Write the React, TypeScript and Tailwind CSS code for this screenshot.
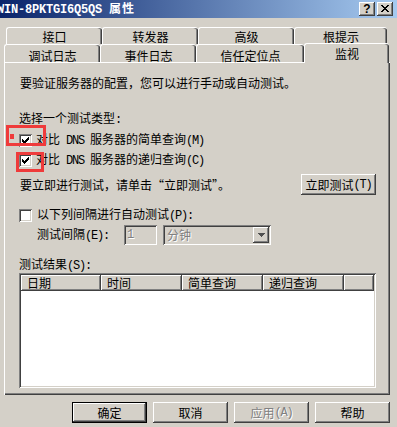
import React from "react";

const RAISED =
  "shadow-[inset_-1px_-1px_#404040,inset_1px_1px_#ffffff,inset_-2px_-2px_#808080,inset_2px_2px_#d4d0c8]";
const SUNKEN =
  "shadow-[inset_1px_1px_#808080,inset_-1px_-1px_#ffffff,inset_2px_2px_#404040,inset_-2px_-2px_#d4d0c8]";

function T({ s }: { s: string }) {
  const parts = s.split(/([\x20-\x7e]+)/).filter((p) => p.length > 0);
  return (
    <>
      {parts.map((p, i) =>
        /^[\x20-\x7e]+$/.test(p) ? (
          <span
            key={i}
            className="font-['Liberation_Mono',monospace] text-[12px] tracking-[-1.2px] whitespace-pre"
          >
            {p}
          </span>
        ) : (
          <span key={i}>{p}</span>
        )
      )}
    </>
  );
}

const CHECK = ["......#", ".....##", "#...###", "##.###.", "#####..", ".###...", "..#...."];

function Checkbox({ checked }: { checked: boolean }) {
  return (
    <div className={`w-[13px] h-[13px] bg-white shrink-0 flex items-center justify-center ${SUNKEN}`}>
      {checked && (
        <svg width="7" height="7" viewBox="0 0 7 7" shapeRendering="crispEdges">
          {CHECK.map((row, y) =>
            row.split("").map((c, x) =>
              c === "#" ? <rect key={`${x}-${y}`} x={x} y={y} width="1" height="1" fill="#000" /> : null
            )
          )}
        </svg>
      )}
    </div>
  );
}

function Btn({
  label,
  w = 75,
  disabled,
  def,
}: {
  label: string;
  w?: number;
  disabled?: boolean;
  def?: boolean;
}) {
  return (
    <div
      className={`h-[21px] bg-[#d4d0c8] ${def ? "border border-black" : ""}`}
      style={{ width: w }}
    >
      <div
        className={`h-full w-full flex items-center justify-center leading-[14px] whitespace-nowrap ${RAISED} ${
          disabled ? "text-[#808080] [text-shadow:1px_1px_0_#ffffff]" : "text-black"
        }`}
      >
        <T s={label} />
      </div>
    </div>
  );
}

function Tab1({ label, w }: { label: string; w: number }) {
  return (
    <div
      className="h-[17px] pt-[2px] leading-[14px] text-center border-l border-t border-white rounded-tl-[3px] rounded-tr-[3px] shadow-[inset_-1px_0_#404040,inset_-2px_0_#808080] bg-[#d4d0c8]"
      style={{ width: w }}
    >
      {label}
    </div>
  );
}

function Tab2({ label, w, selected }: { label: string; w: number; selected?: boolean }) {
  if (selected) {
    return (
      <div
        className="relative z-10 h-[20px] mb-[-1px] pt-[3px] leading-[14px] text-center border-l border-t border-white rounded-tl-[3px] rounded-tr-[3px] shadow-[inset_-1px_0_#404040,inset_-2px_0_#808080] bg-[#d4d0c8]"
        style={{ width: w }}
      >
        {label}
      </div>
    );
  }
  return (
    <div
      className="h-[18px] pt-[4px] leading-[14px] text-center border-l border-t border-white rounded-tl-[3px] rounded-tr-[3px] shadow-[inset_-1px_0_#404040,inset_-2px_0_#808080] bg-[#d4d0c8]"
      style={{ width: w }}
    >
      {label}
    </div>
  );
}

function HeaderCell({ label, w }: { label: string; w?: number }) {
  return (
    <div
      className={`h-[16px] leading-[16px] pl-[6px] bg-[#d4d0c8] ${RAISED} ${w ? "shrink-0" : "flex-1"}`}
      style={w ? { width: w } : undefined}
    >
      {label}
    </div>
  );
}

export default function App() {
  return (
    <div className="relative w-[397px] h-[427px] overflow-hidden bg-[#d4d0c8] text-[12px] text-black font-['Noto_Sans_CJK_SC',sans-serif]">
      {/* Title bar */}
      <div className="h-[18px] flex items-center justify-between bg-[linear-gradient(to_right,#0a246a,#a6caf0)]">
        <div className="ml-[-3px] text-white font-bold leading-[14px] whitespace-nowrap">
          <span className="font-['Liberation_Mono',monospace] text-[12px] tracking-[-0.2px]">WIN-8PKTGI6Q5QS </span>
          <span className="tracking-[1px]">属性</span>
        </div>
        <div className="flex gap-[2px] pr-[4px]">
          <div className={`w-[16px] h-[14px] bg-[#d4d0c8] flex items-center justify-center ${RAISED}`}>
            <span className="font-['Liberation_Sans',sans-serif] font-bold text-[12px] leading-[12px] mt-[-1px]">?</span>
          </div>
          <div className={`w-[16px] h-[14px] bg-[#d4d0c8] flex items-center justify-center ${RAISED}`}>
            <svg width="8" height="7" viewBox="0 0 8 7" shapeRendering="crispEdges" className="mt-[-1px]">
              <path d="M0 0h2v1h1v1h2V1h1V0h2v1H7v1H6v1H5v1h1v1h1v1h1v1H6V6H5V5H3v1H2v1H0V6h1V5h1V4h1V3H2V2H1V1H0z" fill="#000" />
            </svg>
          </div>
        </div>
      </div>

      {/* Tabs row 1 */}
      <div className="mt-[9px] pl-[6px] flex">
        <Tab1 label="接口" w={96} />
        <Tab1 label="转发器" w={96} />
        <Tab1 label="高级" w={96} />
        <Tab1 label="根提示" w={93} />
      </div>
      {/* Tabs row 2 */}
      <div className="mt-[-1px] pl-[4px] flex items-end">
        <Tab2 label="调试日志" w={96} />
        <Tab2 label="事件日志" w={96} />
        <Tab2 label="信任定位点" w={108} />
        <Tab2 label="监视" w={85} selected />
      </div>

      {/* Panel */}
      <div className="ml-[4px] w-[386px] h-[333px] border-l border-t border-white shadow-[inset_-1px_-1px_#404040,inset_-2px_-2px_#808080] pt-[13px] pl-[14px] pr-[14px] flex flex-col">
        <div className="leading-[14px] pl-[1px]">
          <T s="要验证服务器的配置，您可以进行手动或自动测试。" />
        </div>
        <div className="mt-[21px] leading-[14px]">
          <T s="选择一个测试类型:" />
        </div>
        <div className="mt-[3px] h-[20px] flex items-center">
          <Checkbox checked />
          <div className="ml-[4px] leading-[14px] whitespace-nowrap">
            <T s="对比 DNS 服务器的简单查询(M)" />
          </div>
        </div>
        <div className="h-[20px] flex items-center">
          <Checkbox checked />
          <div className="ml-[4px] leading-[14px] whitespace-nowrap">
            <T s="对比 DNS 服务器的递归查询(C)" />
          </div>
        </div>
        <div className="mt-[4px] h-[21px] flex items-center justify-between">
          <div className="leading-[14px] pl-[1px] whitespace-nowrap">
            <T s="要立即进行测试，请单击“立即测试”。" />
          </div>
          <Btn label="立即测试(T)" />
        </div>
        <div className="mt-[10px] h-[20px] flex items-center">
          <Checkbox checked={false} />
          <div className="ml-[5px] leading-[14px] whitespace-nowrap">
            <T s="以下列间隔进行自动测试(P):" />
          </div>
        </div>
        <div className="h-[20px] flex items-center pl-[18px]">
          <div className="w-[87px] leading-[14px] whitespace-nowrap">
            <T s="测试间隔(E):" />
          </div>
          <div className={`w-[33px] h-[20px] pl-[3px] flex items-center ${SUNKEN}`}>
            <span className="text-[#808080] [text-shadow:1px_1px_0_#ffffff] font-['Liberation_Mono',monospace] text-[12px]">1</span>
          </div>
          <div className={`ml-[6px] w-[108px] h-[20px] pl-[4px] pr-[2px] flex items-center justify-between ${SUNKEN}`}>
            <span className="text-[#808080] [text-shadow:1px_1px_0_#ffffff] leading-[14px]">分钟</span>
            <div className={`w-[16px] h-[16px] bg-[#d4d0c8] flex items-center justify-center ${RAISED}`}>
              <svg width="7" height="4" viewBox="0 0 7 4" shapeRendering="crispEdges">
                <path d="M0 0h7v1H6v1H5v1H4v1H3V3H2V2H1V1H0z" fill="#505050" />
              </svg>
            </div>
          </div>
        </div>
        <div className="mt-[12px] leading-[14px]">
          <T s="测试结果(S):" />
        </div>
        <div className={`h-[115px] bg-white p-[2px] ${SUNKEN}`}>
          <div className="flex">
            <HeaderCell label="日期" w={80} />
            <HeaderCell label="时间" w={81} />
            <HeaderCell label="简单查询" w={81} />
            <HeaderCell label="递归查询" w={81} />
            <HeaderCell label="" />
          </div>
        </div>
      </div>

      {/* Bottom buttons */}
      <div className="mt-[7px] pr-[7px] flex justify-end gap-[6px]">
        <Btn label="确定" def />
        <Btn label="取消" />
        <Btn label="应用(A)" disabled />
        <Btn label="帮助" />
      </div>

      {/* Red annotation boxes */}
      <div className="absolute left-[6px] top-[125px] w-[40px] h-[21px] border-[3px] border-[#ef3b3b]" />
      <div className="absolute left-[10px] top-[134px] w-[4px] h-[5px] bg-[#ef3b3b]" />
      <div className="absolute left-[16px] top-[152px] w-[28px] h-[20px] border-[3px] border-[#ef3b3b]" />
    </div>
  );
}
